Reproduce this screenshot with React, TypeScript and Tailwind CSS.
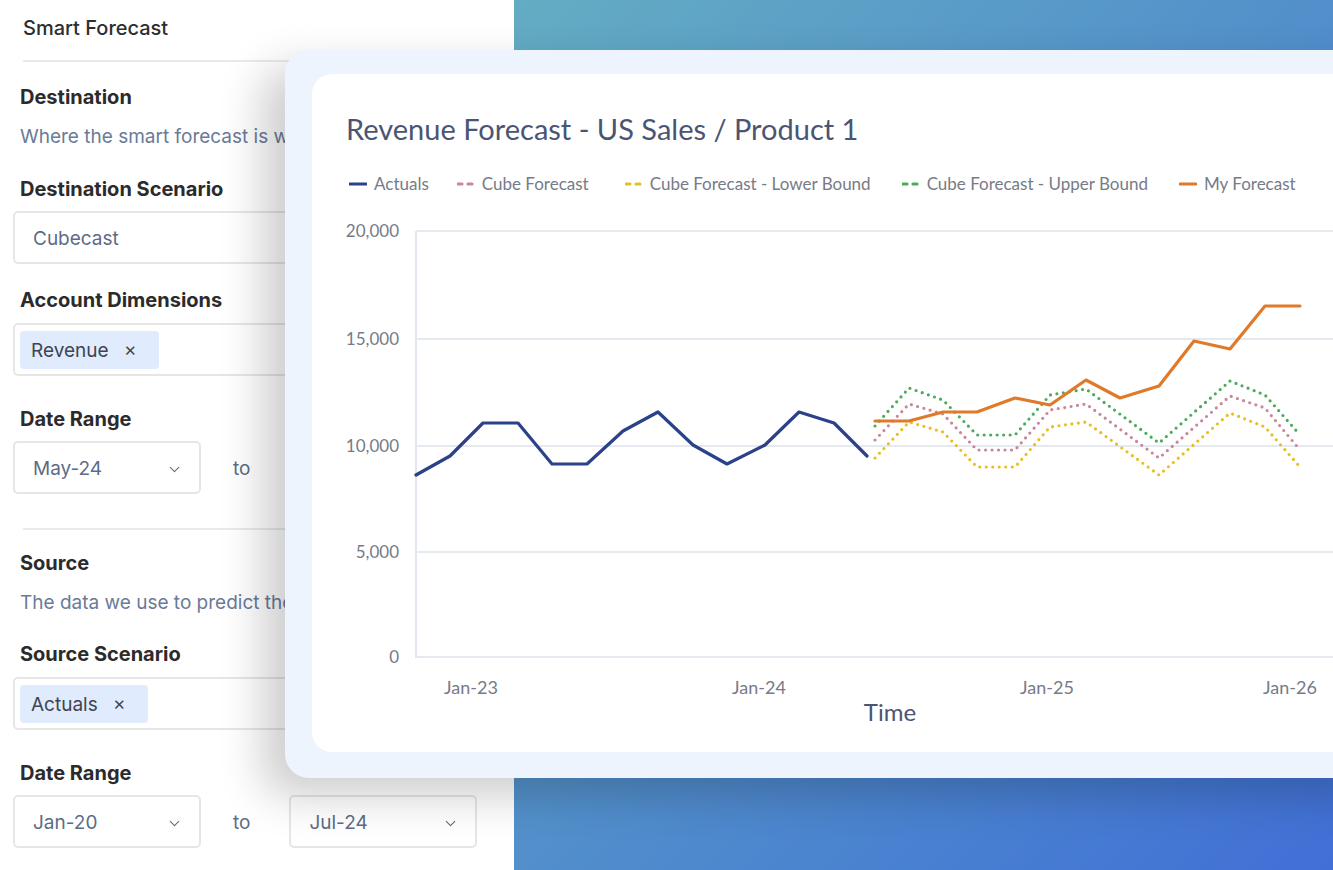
import React from "react";
import { ChevronDown } from "lucide-react";

type Pt = [number, number];

const actuals: Pt[] = [[416,475],[450,456],[483,423],[518,423],[552,464],[587,464],[623,431],[658,412],[693,445],[727,464],[765,445],[799,412],[834,423],[867,456]];
const orange: Pt[] = [[875,421],[909,421],[943,412],[977,412],[1015,398],[1050,405],[1086,380],[1120,398],[1159,386],[1194,341],[1230,349],[1265,306],[1300,306]];
const green: Pt[] = [[875,426],[909,388],[943,400],[977,435],[1015,435],[1050,395],[1086,389],[1159,443],[1230,381],[1265,395],[1300,435]];
const pink: Pt[] = [[875,440],[909,404],[943,414],[977,450],[1015,450],[1050,410],[1086,404],[1159,458],[1230,396],[1265,408],[1300,450]];
const yellow: Pt[] = [[875,458],[909,422],[943,432],[977,467],[1015,467],[1050,427],[1086,422],[1159,475],[1230,413],[1265,427],[1300,467]];

const pts = (a: Pt[]) => a.map((p) => p.join(",")).join(" ");

function Heading({ children, mt }: { children: React.ReactNode; mt: string }) {
  return (
    <div className={`${mt} pl-[7px] text-[20px] leading-[24px] font-bold text-[#2b2b2b] whitespace-nowrap`}>{children}</div>
  );
}

function Select({ value, w }: { value: string; w: string }) {
  return (
    <div className={`${w} h-[53px] border-2 border-[#e6e6e6] rounded-[5px] flex items-center justify-between pl-[18px] pr-[16px] pt-[3px] text-[19px] text-[#5d6b86]`}>
      <span>{value}</span>
      <ChevronDown size={17} strokeWidth={1.6} className="text-[#666b75]" />
    </div>
  );
}

function Chip({ label }: { label: string }) {
  return (
    <div className="h-[53px] w-[500px] border-2 border-[#e6e6e6] rounded-[5px] flex items-center pl-[5px]">
      <div className="h-[38px] bg-[#e0ebfd] rounded-[4px] flex items-center pl-[11px] pr-[22px] pt-[3px] text-[19px] text-[#3f4450]">
        <span>{label}</span>
        <span className="ml-[15px] text-[15px] text-[#444]">✕</span>
      </div>
    </div>
  );
}

function Legend({ color, dashed, label, ml }: { color: string; dashed?: boolean; label: string; ml: string }) {
  return (
    <div className={`${ml} flex items-center gap-[7px]`}>
      <svg width="18" height="4" viewBox="0 0 18 4">
        <line x1="1" y1="2" x2="17" y2="2" stroke={color} strokeWidth="3.2" strokeLinecap="round" strokeDasharray={dashed ? "4 6" : undefined} />
      </svg>
      <span>{label}</span>
    </div>
  );
}

export default function App() {
  const gridYs = [231, 339, 446, 552, 657];
  const yLabels = ["20,000", "15,000", "10,000", "5,000", "0"];
  return (
    <div className="relative w-[1333px] h-[870px] overflow-hidden flex bg-white font-['Inter',sans-serif]">
      {/* Left form panel */}
      <div className="w-[514px] shrink-0 bg-white px-[13px] flex flex-col">
        <div className="pl-[10px] pt-[16px] text-[20px] leading-[24px] font-medium text-[#2e2e2e]">Smart Forecast</div>
        <div className="ml-[10px] mt-[20px] h-[2px] bg-[#e8eaef]" />
        <Heading mt="mt-[23px]">Destination</Heading>
        <div className="mt-[16px] pl-[7px] text-[19px] leading-[24px] text-[#6b7a97] whitespace-nowrap">Where the smart forecast is written to</div>
        <Heading mt="mt-[28px]">Destination Scenario</Heading>
        <div className="mt-[10px] h-[53px] w-[500px] border-2 border-[#e6e6e6] rounded-[5px] flex items-center pl-[18px] pt-[3px] text-[19px] text-[#5d6b86]">Cubecast</div>
        <Heading mt="mt-[24px]">Account Dimensions</Heading>
        <div className="mt-[11px]"><Chip label="Revenue" /></div>
        <Heading mt="mt-[31px]">Date Range</Heading>
        <div className="mt-[10px] flex items-center">
          <Select value="May-24" w="w-[188px]" />
          <span className="ml-[32px] pt-[3px] text-[19px] text-[#5d6b86]">to</span>
          <div className="ml-[39px]"><Select value="Jul-24" w="w-[188px]" /></div>
        </div>
        <div className="ml-[10px] mt-[34px] h-[2px] bg-[#e8eaef]" />
        <Heading mt="mt-[21px]">Source</Heading>
        <div className="mt-[16px] pl-[7px] text-[19px] leading-[24px] text-[#6b7a97] whitespace-nowrap">The data we use to predict the forecast</div>
        <Heading mt="mt-[27px]">Source Scenario</Heading>
        <div className="mt-[11px]"><Chip label="Actuals" /></div>
        <Heading mt="mt-[31px]">Date Range</Heading>
        <div className="mt-[10px] flex items-center">
          <Select value="Jan-20" w="w-[188px]" />
          <span className="ml-[32px] pt-[3px] text-[19px] text-[#5d6b86]">to</span>
          <div className="ml-[39px]"><Select value="Jul-24" w="w-[188px]" /></div>
        </div>
      </div>

      {/* Gradient background */}
      <div className="flex-1 bg-linear-to-br from-[#64acc3] via-[#528fcb] to-[#416fd6]" />

      {/* Floating chart card */}
      <div className="absolute left-[285px] top-[50px] w-[1100px] h-[728px] bg-[#eef4fd] rounded-[24px] pl-[27px] pt-[24px] shadow-[-22px_18px_45px_rgba(0,0,0,0.2)]">
        <div className="h-[678px] bg-white rounded-[20px] flex flex-col font-['Lato',sans-serif]">
          <div className="pl-[34px] pt-[37px] text-[29px] leading-[36px] text-[#4b5573] whitespace-nowrap">Revenue Forecast - US Sales / Product 1</div>
          <div className="pl-[37px] mt-[26px] h-[22px] flex items-center text-[17px] leading-[22px] text-[#767b88] whitespace-nowrap">
            <Legend ml="ml-0" color="#2b4189" label="Actuals" />
            <Legend ml="ml-[28px]" color="#c8879a" dashed label="Cube Forecast" />
            <Legend ml="ml-[36px]" color="#e6c020" dashed label="Cube Forecast - Lower Bound" />
            <Legend ml="ml-[31px]" color="#4caa5c" dashed label="Cube Forecast - Upper Bound" />
            <Legend ml="ml-[31px]" color="#e07a2b" label="My Forecast" />
          </div>
          <svg className="mt-[25px]" width="1021" height="520" viewBox="312 220 1021 520">
            {gridYs.map((y) => (
              <line key={y} x1="416" y1={y} x2="1340" y2={y} stroke="#e6e9f0" strokeWidth="2" />
            ))}
            <line x1="416" y1="231" x2="416" y2="658" stroke="#e3e7ef" strokeWidth="2" />
            {gridYs.map((y, i) => (
              <text key={i} x="399" y={y + 6} textAnchor="end" fontSize="17" fill="#767b88" fontFamily="Lato, sans-serif">{yLabels[i]}</text>
            ))}
            {[["Jan-23", 471], ["Jan-24", 759], ["Jan-25", 1047], ["Jan-26", 1290]].map(([t, x]) => (
              <text key={t as string} x={x as number} y={694} textAnchor="middle" fontSize="18" fill="#767b88" fontFamily="Lato, sans-serif">{t}</text>
            ))}
            <text x="890" y="721" textAnchor="middle" fontSize="24" fill="#4b5573" fontFamily="Lato, sans-serif">Time</text>
            <polyline points={pts(actuals)} fill="none" stroke="#2b4189" strokeWidth="3.2" strokeLinejoin="round" strokeLinecap="round" />
            <polyline points={pts(yellow)} fill="none" stroke="#e6c020" strokeWidth="3.2" strokeLinecap="round" strokeDasharray="0 6.5" />
            <polyline points={pts(pink)} fill="none" stroke="#c8879a" strokeWidth="3.2" strokeLinecap="round" strokeDasharray="0 6.5" />
            <polyline points={pts(green)} fill="none" stroke="#4caa5c" strokeWidth="3.2" strokeLinecap="round" strokeDasharray="0 6.5" />
            <polyline points={pts(orange)} fill="none" stroke="#e07a2b" strokeWidth="3.2" strokeLinejoin="round" strokeLinecap="round" />
          </svg>
        </div>
      </div>
    </div>
  );
}
